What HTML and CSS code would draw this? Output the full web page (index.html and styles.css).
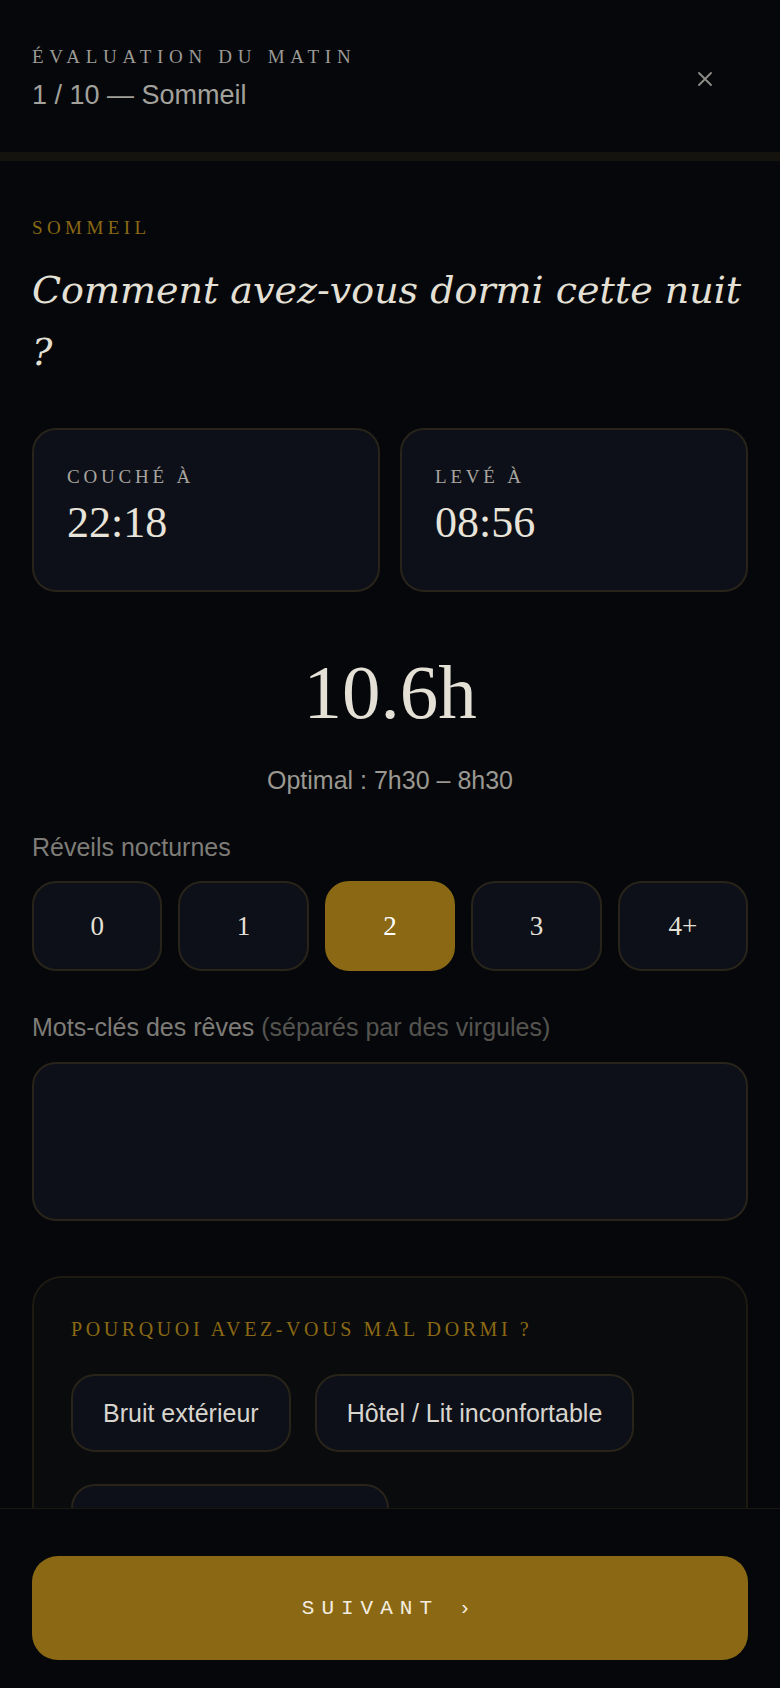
FILE: index.html
```html
<!DOCTYPE html>
<html lang="fr">
<head>
    <meta charset="UTF-8">
    <meta name="viewport" content="width=device-width, initial-scale=1.0">
    <title>Évaluation du matin</title>
    <link rel="stylesheet" href="styles.css">
</head>
<body>
    <header class="top">
        <div class="top-text">
            <div class="kicker">Évaluation du matin</div>
            <div class="step">1 / 10 — Sommeil</div>
        </div>
        <button class="close" aria-label="Fermer">
            <svg width="14" height="14" viewBox="0 0 14 14"><path d="M1 1L13 13M13 1L1 13" stroke="#8f8d88" stroke-width="1.8" stroke-linecap="round"/></svg>
        </button>
    </header>
    <div class="track"><div class="fill"></div></div>

    <main class="content">
        <div class="section">Sommeil</div>
        <h1 class="question">Comment avez-vous dormi cette nuit ?</h1>

        <div class="times">
            <div class="time-card">
                <span class="time-label">Couché à</span>
                <span class="time-value">22:18</span>
            </div>
            <div class="time-card">
                <span class="time-label">Levé à</span>
                <span class="time-value">08:56</span>
            </div>
        </div>

        <div class="duration">10.6h</div>
        <div class="optimal">Optimal : 7h30 – 8h30</div>

        <div class="field-label">Réveils nocturnes</div>
        <div class="wakes">
            <button class="wake">0</button>
            <button class="wake">1</button>
            <button class="wake on">2</button>
            <button class="wake">3</button>
            <button class="wake">4+</button>
        </div>

        <div class="field-label">Mots-clés des rêves <span class="hint">(séparés par des virgules)</span></div>
        <textarea class="dreams"></textarea>

        <div class="reasons">
            <div class="reasons-title">Pourquoi avez-vous mal dormi ?</div>
            <div class="chips">
                <button class="chip">Bruit extérieur</button>
                <button class="chip">Hôtel / Lit inconfortable</button>
                <button class="chip">Enfant / Animal réveillé</button>
                <button class="chip">Douleurs / Inconfort physique</button>
                <button class="chip">Écrans tard</button>
            </div>
        </div>
    </main>

    <footer class="bottom">
        <button class="next">Suivant ›</button>
    </footer>
</body>
</html>
```

FILE: styles.css
```css
* {
    margin: 0;
    padding: 0;
    box-sizing: border-box;
}

body {
    background-color: #05070b;
    color: #e4e0d6;
    font-family: "Liberation Sans", Arial, sans-serif;
}

button, textarea {
    font: inherit;
    color: inherit;
}

/* header */

.top {
    display: flex;
    align-items: center;
    justify-content: space-between;
    padding: 45px 55px 40px 32px;
}

.kicker {
    font-family: "Liberation Serif", serif;
    font-size: 19px;
    line-height: 24px;
    letter-spacing: 5.7px;
    text-transform: uppercase;
    color: #9c9a94;
}

.step {
    margin-top: 9px;
    font-size: 27px;
    line-height: 34px;
    color: #a3a19b;
}

.close {
    width: 40px;
    height: 40px;
    border: none;
    background: none;
    display: flex;
    align-items: center;
    justify-content: center;
}

.track {
    height: 9px;
    background-color: #14130d;
}

.fill {
    width: 0;
    height: 100%;
    background-color: #8b6914;
}

/* content */

.content {
    padding: 0 32px 260px;
}

.section {
    margin-top: 56px;
    font-family: "Liberation Serif", serif;
    font-size: 19px;
    line-height: 22px;
    letter-spacing: 4.4px;
    text-transform: uppercase;
    color: #8b6914;
}

.question {
    margin-top: 20px;
    font-family: "DejaVu Serif", serif;
    font-style: italic;
    font-weight: normal;
    font-size: 38px;
    line-height: 62px;
    color: #e4e0d6;
}

.times {
    margin-top: 45px;
    display: grid;
    grid-template-columns: 1fr 1fr;
    gap: 20px;
}

.time-card {
    display: flex;
    flex-direction: column;
    padding: 36px 33px 43px;
    background-color: #0d1019;
    border: 2px solid #29241a;
    border-radius: 24px;
}

.time-label {
    font-family: "Liberation Serif", serif;
    font-size: 19px;
    line-height: 22px;
    letter-spacing: 3.8px;
    text-transform: uppercase;
    color: #a8a59e;
}

.time-value {
    margin-top: 11px;
    font-family: "Liberation Serif", serif;
    font-size: 44px;
    line-height: 48px;
    color: #e8e4da;
}

.duration {
    margin-top: 62px;
    text-align: center;
    font-family: "Liberation Serif", serif;
    font-size: 77px;
    line-height: 76px;
    color: #e4e0d6;
}

.optimal {
    margin-top: 35px;
    text-align: center;
    font-size: 25px;
    line-height: 30px;
    color: #9a9891;
}

.field-label {
    margin-top: 37px;
    font-size: 25px;
    line-height: 30px;
    color: #7e7c77;
}

.hint {
    color: #55544f;
}

.wakes {
    margin-top: 19px;
    display: grid;
    grid-template-columns: repeat(5, 1fr);
    gap: 16px;
    margin-bottom: 41px;
}

.wake {
    height: 90px;
    background-color: #0d1019;
    border: 2px solid #29241a;
    border-radius: 24px;
    font-family: "Liberation Serif", serif;
    font-size: 27px;
    color: #e4e0d6;
}

.wake.on {
    background-color: #8b6914;
    border-color: #8b6914;
    color: #ffffff;
}

.dreams {
    display: block;
    width: 100%;
    height: 159px;
    margin-top: 20px;
    padding: 20px 24px;
    background-color: #0d1019;
    border: 2px solid #29241a;
    border-radius: 24px;
    resize: none;
    outline: none;
}

.reasons {
    margin-top: 55px;
    padding: 39px 37px 40px;
    background-color: #0a0b0c;
    border: 2px solid #1d1a12;
    border-radius: 30px;
}

.reasons-title {
    font-family: "Liberation Serif", serif;
    font-size: 20px;
    line-height: 24px;
    letter-spacing: 3.6px;
    text-transform: uppercase;
    color: #8b6914;
}

.chips {
    margin-top: 33px;
    display: flex;
    flex-wrap: wrap;
    gap: 32px 24px;
}

.chip {
    height: 78px;
    padding: 0 30px;
    background-color: #0d1019;
    border: 2px solid #29241a;
    border-radius: 24px;
    font-size: 25px;
    color: #d8d5ce;
}

/* footer */

.bottom {
    position: fixed;
    left: 0;
    right: 0;
    bottom: 0;
    height: 180px;
    padding: 47px 32px 28px;
    background-color: #05070b;
    border-top: 1px solid #1a1812;
}

.next {
    width: 100%;
    height: 104px;
    border: none;
    border-radius: 26px;
    background-color: #8b6914;
    font-family: "Liberation Mono", monospace;
    font-size: 21px;
    letter-spacing: 7px;
    text-transform: uppercase;
    color: #f3eee0;
}
```
